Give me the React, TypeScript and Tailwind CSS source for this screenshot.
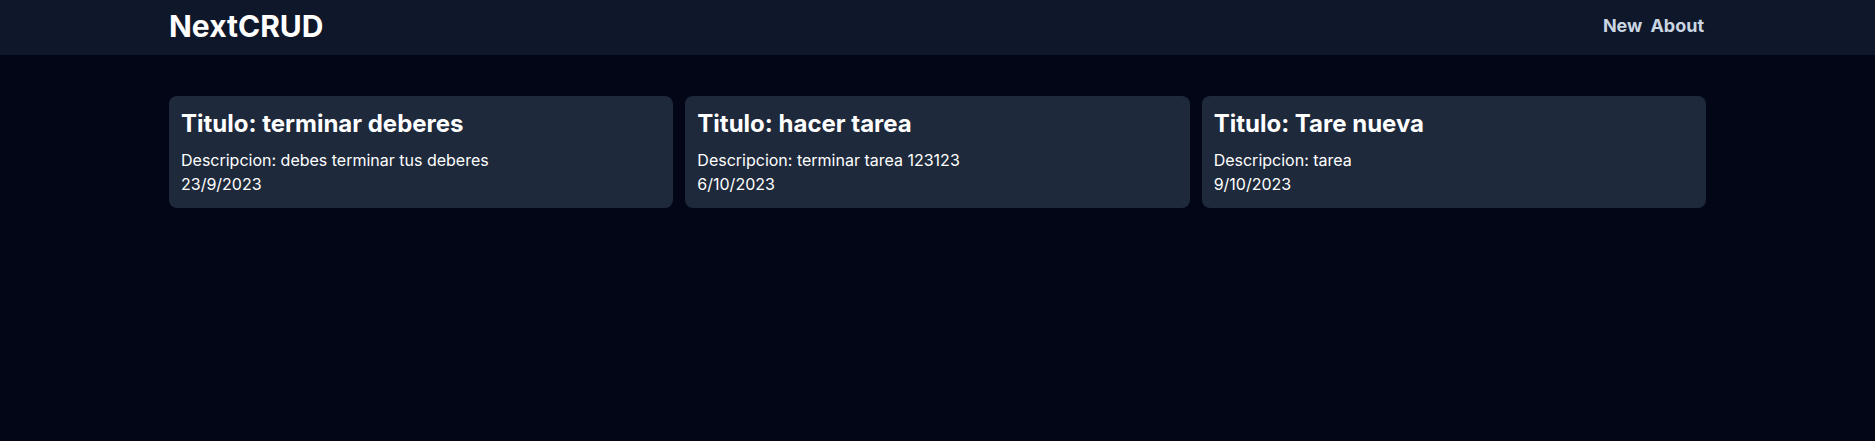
import React from "react";

const tasks = [
  { title: "terminar deberes", description: "debes terminar tus deberes", date: "23/9/2023" },
  { title: "hacer tarea", description: "terminar tarea 123123", date: "6/10/2023" },
  { title: "Tare nueva", description: "tarea", date: "9/10/2023" },
];

export default function App() {
  return (
    <div className="min-h-screen bg-[#020617] text-white" style={{ fontFamily: "Inter, 'Noto Sans', sans-serif" }}>
      <nav className="bg-[#0f172a]">
        <div className="mx-auto flex h-[55px] w-[1537px] items-start justify-between pt-2">
          <h1 className="text-3xl font-bold leading-9">NextCRUD</h1>
          <ul className="flex gap-2 pr-[2px] pt-1 text-lg font-bold leading-7 text-slate-300">
            <li>New</li>
            <li>About</li>
          </ul>
        </div>
      </nav>
      <main className="mx-auto w-[1537px] pt-[41px]">
        <div className="grid grid-cols-3 gap-3">
          {tasks.map((t) => (
            <div key={t.title} className="rounded-lg bg-[#1e293b] p-3">
              <h2 className="mb-2 text-2xl font-bold leading-8">Titulo: {t.title}</h2>
              <p className="text-base leading-6">Descripcion: {t.description}</p>
              <p className="text-base leading-6">{t.date}</p>
            </div>
          ))}
        </div>
      </main>
    </div>
  );
}
